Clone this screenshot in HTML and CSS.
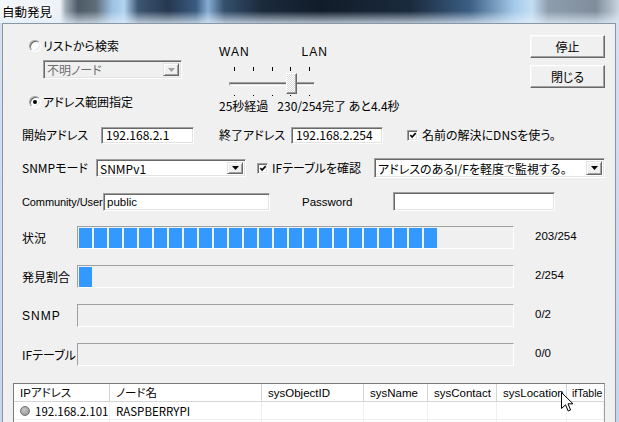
FILE: index.html
```html
<!DOCTYPE html>
<html lang="ja">
<head>
<meta charset="utf-8">
<title>自動発見</title>
<link rel="stylesheet" href="styles.css">
</head>
<body>
<div class="window">
  <div class="titlebar"><span class="title">自動発見</span></div>
  <div class="frame">
    <div class="client">
      <div class="top">
        <div class="mode-col">
          <div class="radio-row first"><span class="radio"></span><span>リストから検索</span></div>
          <div class="combo sunken disabled mode-combo">
            <span class="combo-text">不明ノード</span>
            <span class="combo-btn"><svg width="7" height="4" viewBox="0 0 7 4"><polygon points="0,0 7,0 3.5,4" fill="#a0a0a0"/></svg></span>
          </div>
          <div class="radio-row second"><span class="radio checked"></span><span>アドレス範囲指定</span></div>
        </div>
        <div class="slider-col">
          <div class="slider-labels"><span>WAN</span><span class="lan">LAN</span></div>
          <div class="trackbar">
            <div class="ticks"><i></i><i></i><i></i><i></i><i></i></div>
            <div class="channel"></div>
            <div class="dots"><i></i><i></i><i></i><i></i><i></i></div>
            <div class="thumb"></div>
          </div>
          <div class="slider-status"><span>25秒経過</span><span class="done">230/254完了 あと4.4秒</span></div>
        </div>
        <div class="btn-col">
          <div class="btn">停止</div>
          <div class="btn">閉じる</div>
        </div>
      </div>

      <div class="row addr-row">
        <span class="lbl w79">開始アドレス</span>
        <div class="edit sunken w93">192.168.2.1</div>
        <span class="lbl w72 ml25">終了アドレス</span>
        <div class="edit sunken w92">192.168.2.254</div>
        <span class="check ml24"><svg width="9" height="9" viewBox="0 0 9 9"><polyline points="1.5,4 3.5,6.2 7.5,1.8" fill="none" stroke="#000" stroke-width="1.8"/></svg></span>
        <span class="check-lbl">名前の解決にDNSを使う。</span>
      </div>

      <div class="row snmp-row">
        <span class="lbl w74">SNMPモード</span>
        <div class="combo sunken snmp-combo">
          <span class="combo-text">SNMPv1</span>
          <span class="combo-btn"><svg width="7" height="4" viewBox="0 0 7 4"><polygon points="0,0 7,0 3.5,4" fill="#000"/></svg></span>
        </div>
        <span class="check ml11"><svg width="9" height="9" viewBox="0 0 9 9"><polyline points="1.5,4 3.5,6.2 7.5,1.8" fill="none" stroke="#000" stroke-width="1.8"/></svg></span>
        <span class="check-lbl w102">IFテーブルを確認</span>
        <div class="combo sunken if-combo">
          <span class="combo-text">アドレスのあるI/Fを軽度で監視する。</span>
          <span class="combo-btn"><svg width="7" height="4" viewBox="0 0 7 4"><polygon points="0,0 7,0 3.5,4" fill="#000"/></svg></span>
        </div>
      </div>

      <div class="row comm-row">
        <span class="lbl latin comm-lbl">Community/User</span>
        <div class="edit sunken latin comm-edit">public</div>
        <span class="lbl latin pw-lbl">Password</span>
        <div class="edit sunken pw-edit"></div>
      </div>

      <div class="prog-row">
        <span class="lbl w55">状況</span>
        <div class="bar">
          <i></i><i></i><i></i><i></i><i></i><i></i><i></i><i></i><i></i><i></i><i></i><i></i>
          <i></i><i></i><i></i><i></i><i></i><i></i><i></i><i></i><i></i><i></i><i></i><i></i>
        </div>
        <span class="val">203/254</span>
      </div>
      <div class="prog-row">
        <span class="lbl w55">発見割合</span>
        <div class="bar"><i></i></div>
        <span class="val">2/254</span>
      </div>
      <div class="prog-row">
        <span class="lbl w55 snmp-lbl">SNMP</span>
        <div class="bar"></div>
        <span class="val">0/2</span>
      </div>
      <div class="prog-row">
        <span class="lbl w55">IFテーブル</span>
        <div class="bar"></div>
        <span class="val">0/0</span>
      </div>

      <div class="listview">
        <div class="lv-head">
          <div class="lv-col">IPアドレス</div>
          <div class="lv-col">ノード名</div>
          <div class="lv-col">sysObjectID</div>
          <div class="lv-col">sysName</div>
          <div class="lv-col">sysContact</div>
          <div class="lv-col">sysLocation</div>
          <div class="lv-col last">ifTable</div>
        </div>
        <div class="lv-row">
          <div class="lv-cell ip"><span class="node-dot"></span>192.168.2.101</div>
          <div class="lv-cell">RASPBERRYPI</div>
          <div class="lv-cell"></div>
          <div class="lv-cell"></div>
          <div class="lv-cell"></div>
          <div class="lv-cell"></div>
          <div class="lv-cell"></div>
        </div>
        <div class="lv-row">
          <div class="lv-cell"></div><div class="lv-cell"></div><div class="lv-cell"></div><div class="lv-cell"></div>
          <div class="lv-cell"></div><div class="lv-cell"></div><div class="lv-cell"></div>
        </div>
      </div>
    </div>
  </div>
  <svg class="cursor" width="13" height="20" viewBox="0 0 13 20"><polygon points="0.5,0.5 0.5,16.5 4.5,12.8 7.2,19 9.6,18 7,11.8 12,11.8" fill="#fff" stroke="#000" stroke-width="1" stroke-linejoin="miter"/></svg>
</div>
</body>
</html>
```

FILE: styles.css
```css
* { box-sizing: border-box; margin: 0; padding: 0; }
html, body { width: 619px; height: 422px; overflow: hidden; }
body {
  background: #f0f0f0;
  font-family: "Noto Sans CJK JP", sans-serif;
  font-size: 12px;
  line-height: 14px;
  color: #000;
  font-feature-settings: "palt" 1;
}
.window { position: relative; width: 619px; height: 422px; display: flex; flex-direction: column; }

.titlebar {
  flex: none;
  height: 23px;
  display: flex;
  align-items: center;
  padding-left: 2px;
  background:
    linear-gradient(to bottom, rgba(235,244,252,0) 0, rgba(235,244,252,0) 11px, rgba(225,238,250,0.75) 23px),
    linear-gradient(to right, #f4f7fa 0, #eef2f6 60px, #9aa5af 66px, #4e5b67 78px, #5f6d79 96px, #9cc1e2 112px, #b2d5f1 124px, #3e5672 138px, #25384f 168px, #3a5b80 196px, #86acd2 208px, #35506e 224px, #1b2a3c 262px, #111c28 320px, #1a2a3d 410px, #3c5f84 470px, #a6cbeb 515px, #c3def2 532px, #8e9dac 548px, #7f8d9b 596px, #c9d5df 619px);
}
.title { font-size: 12.5px; line-height: 14px; color: #000; text-shadow: 0 0 6px #fff, 0 0 3px #fff; }

.frame { flex: 1; display: flex; padding: 0 3px 0 2px; background: linear-gradient(#d2e2f1, #c4d7ea); min-height: 0; }
.client {
  flex: 1;
  min-width: 0;
  background: #f0f0f0;
  border: 1px solid #8a96a3;
  border-bottom: 0;
  display: flex;
  flex-direction: column;
}

/* shared 3D edges */
.sunken {
  border: 1px solid;
  border-color: #a0a0a0 #fff #fff #a0a0a0;
  box-shadow: inset 1px 1px 0 #696969, inset -1px -1px 0 #e3e3e3;
  background: #fff;
}

/* top section */
.top { flex: none; height: 95px; display: flex; }
.mode-col { width: 190px; margin-left: 26px; display: flex; flex-direction: column; align-items: flex-start; }
.radio-row { display: flex; align-items: center; height: 14px; gap: 2px; white-space: nowrap; }
.radio-row.first { margin-top: 15px; }
.radio-row.second { margin-top: 16px; }
.radio {
  flex: none;
  width: 12px; height: 12px; border-radius: 50%;
  background: #fff;
  border: 1px solid;
  border-color: #a0a0a0 #fff #fff #a0a0a0;
  box-shadow: inset 1px 1px 0 #696969, inset -1px -1px 0 #e3e3e3;
  display: flex; align-items: center; justify-content: center;
}
.radio.checked::after { content: ""; width: 4px; height: 4px; border-radius: 50%; background: #000; }

.combo { display: flex; align-items: stretch; padding: 2px; }
.combo-text { flex: 1; min-width: 0; padding-left: 1px; line-height: 13px; white-space: nowrap; display: flex; align-items: center; }
.combo-btn {
  flex: none;
  width: 16px;
  display: flex; align-items: center; justify-content: center;
  background: #f0f0f0;
  border: 1px solid;
  border-color: #e3e3e3 #696969 #696969 #e3e3e3;
  box-shadow: inset 1px 1px 0 #fff, inset -1px -1px 0 #a0a0a0;
}
.combo.disabled { background: #f0f0f0; color: #6d6d6d; }
.mode-combo { margin-top: 7px; margin-left: 14px; width: 139px; height: 19px; }

.slider-col { width: 311px; padding-top: 22px; display: flex; flex-direction: column; }
.slider-labels { display: flex; height: 12px; font-family: "Liberation Sans", sans-serif; font-size: 12px; line-height: 12px; letter-spacing: 1px; color: #000; }
.slider-labels .lan { margin-left: 52px; }
.trackbar { position: relative; margin-top: 8px; margin-left: 10px; width: 86px; height: 31px; }
.ticks { display: flex; justify-content: space-between; width: 76px; margin-left: 5px; margin-top: 1px; height: 4px; }
.ticks i { width: 1px; height: 4px; background: #000; }
.channel {
  margin-top: 11px;
  height: 4px;
  border-top: 1px solid #a0a0a0;
  border-left: 1px solid #a0a0a0;
  border-bottom: 1px solid #fff;
  border-right: 1px solid #fff;
  background: #e3e3e3;
  box-shadow: inset 0 1px 0 #696969;
}
.dots { display: flex; justify-content: space-between; width: 76px; margin-left: 5px; margin-top: 9px; height: 1px; }
.dots i { width: 1px; height: 1px; background: #000; }
.thumb {
  position: absolute;
  left: 57px; top: 7px;
  width: 11px; height: 21px;
  border: 1px solid;
  border-color: #fff #696969 #696969 #fff;
  box-shadow: inset -1px -1px 0 #a0a0a0;
  background: repeating-conic-gradient(#ffffff 0 25%, #d8d8d8 0 50%) 0 0 / 2px 2px;
}
.slider-status { margin-top: 2px; height: 14px; white-space: nowrap; display: flex; }
.slider-status .done { margin-left: 9px; }

.btn-col { width: 75px; padding-top: 11px; display: flex; flex-direction: column; gap: 7px; }
.btn {
  height: 23px;
  display: flex; align-items: center; justify-content: center;
  background: #f0f0f0;
  border: 1px solid;
  border-color: #fff #696969 #696969 #fff;
  box-shadow: inset -1px -1px 0 #a0a0a0, inset 1px 1px 0 #f5f5f5;
}

/* form rows */
.row { flex: none; display: flex; align-items: center; padding-left: 19px; white-space: nowrap; }
.addr-row { height: 32px; }
.snmp-row { height: 34px; }
.comm-row { height: 33px; }
.lbl { flex: none; }
.latin { font-family: "Liberation Sans", sans-serif; font-size: 11.5px; }
.comm-lbl { width: 81px; font-size: 11px; letter-spacing: -0.1px; }
.w55 { width: 55px; }
.w72 { width: 72px; }
.w74 { width: 74px; }
.w79 { width: 79px; }
.w92 { width: 92px; }
.w93 { width: 93px; }
.w102 { width: 102px; }
.ml11 { margin-left: 11px; }
.ml24 { margin-left: 24px; }
.ml25 { margin-left: 25px; }

.edit { flex: none; height: 17px; padding-left: 4px; display: flex; align-items: center; white-space: nowrap; }
.comm-edit { width: 167px; height: 18px; padding-left: 3px; }
.pw-lbl { margin-left: 32px; width: 91px; }
.pw-edit { width: 162px; height: 19px; }

.check {
  flex: none;
  width: 11px; height: 11px;
  background: #fff;
  border: 1px solid;
  border-color: #a0a0a0 #fff #fff #a0a0a0;
  box-shadow: inset 1px 1px 0 #696969, inset -1px -1px 0 #e3e3e3;
  display: flex; align-items: center; justify-content: center;
}
.check svg { margin: 1px 0 0 1px; }
.check-lbl { margin-left: 4px; }
.snmp-combo { width: 150px; height: 18px; }
.if-combo { width: 231px; height: 20px; }

/* progress rows */
.prog-row { flex: none; height: 39px; display: flex; align-items: center; padding-left: 19px; }
.snmp-lbl { font-family: "Liberation Sans", sans-serif; letter-spacing: 1px; }
.bar {
  flex: none;
  width: 437px; height: 23px;
  border: 1px solid;
  border-color: #a0a0a0 #fff #fff #a0a0a0;
  padding: 1px;
  display: flex;
  gap: 2px;
}
.bar i { width: 13px; height: 20px; background: #3399ff; }
.val { margin-left: 21px; font-family: "Liberation Sans", sans-serif; font-size: 11.5px; margin-top: -3px; }

/* list view */
.listview {
  flex: none;
  margin-top: 9px;
  margin-left: 10px;
  width: 592px;
  height: 60px;
  background: #fff;
  border: 1px solid;
  border-color: #7a7a7a #a0a0a0 #a0a0a0 #7a7a7a;
  overflow: hidden;
}
.lv-head, .lv-row { display: grid; grid-template-columns: 96px 152px 102px 64px 69px 70px 37px; }
.lv-head { height: 18px; border-bottom: 1px solid #d5d5d5; background: #fff; }
.lv-col {
  font-family: "Liberation Sans", "Noto Sans CJK JP", sans-serif;
  font-size: 11.5px;
  padding-left: 6px;
  border-right: 1px solid #d5d5d5;
  display: flex; align-items: center;
  white-space: nowrap;
}
.lv-col.last { padding-left: 5px; font-size: 10.5px; border-right: 0; }
.lv-row { height: 18px; border-bottom: 1px solid #f0f0f0; }
.lv-cell {
  font-size: 11.5px;
  padding-left: 6px;
  border-right: 1px solid #f0f0f0;
  display: flex; align-items: center;
  white-space: nowrap;
}
.node-dot {
  width: 10px; height: 10px; border-radius: 50%;
  background: radial-gradient(circle at 40% 35%, #c8c8c8 0, #a4a4a4 60%, #8c8c8c 100%);
  border: 1px solid #6e6e6e;
  margin-right: 5px;
  flex: none;
}

.cursor { position: absolute; left: 561px; top: 392px; }
```
